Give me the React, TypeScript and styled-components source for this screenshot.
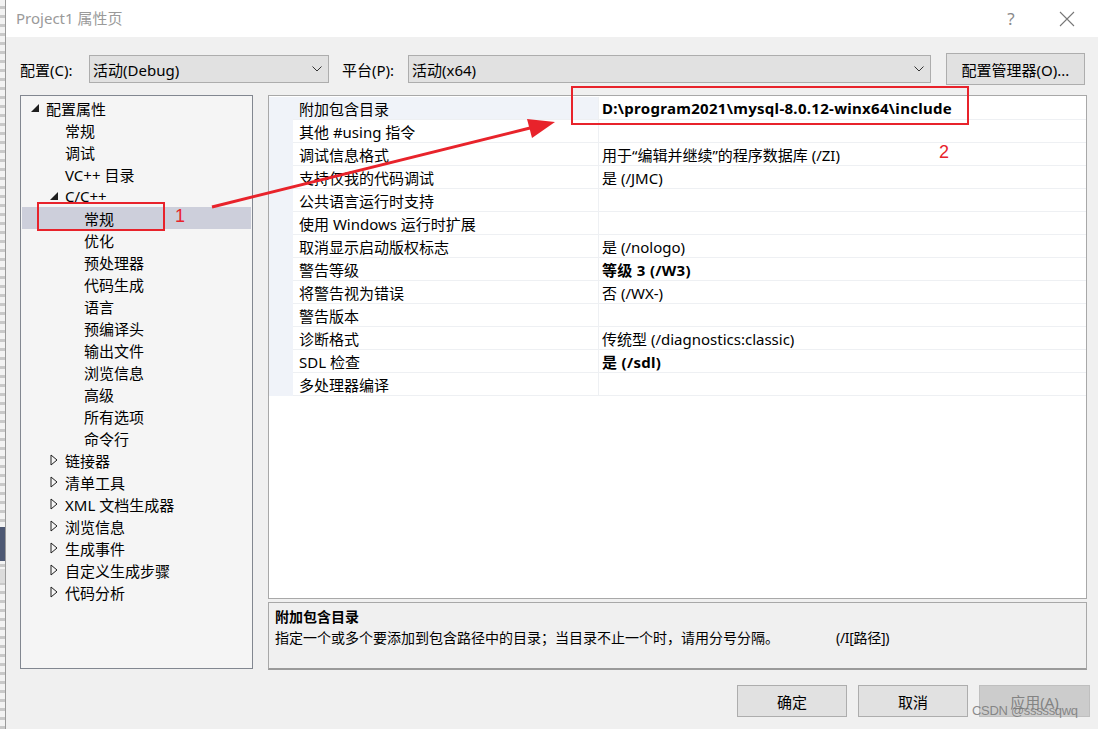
import React from 'react';
import styled, { createGlobalStyle } from 'styled-components';

const GlobalStyle = createGlobalStyle`
  html, body {
    margin: 0;
    padding: 0;
    background: #f0f0f0;
  }
  body {
    font-family: "Noto Sans", "Noto Sans CJK SC", sans-serif;
    font-size: 15px;
    color: #000;
  }
`;

const Page = styled.div`
  position: relative;
  width: 1098px;
  height: 729px;
  display: flex;
  overflow: hidden;
`;

const BackStrip = styled.div`
  width: 5px;
  flex-shrink: 0;
  background: repeating-linear-gradient(#f3f3f3 0 6px, #c9c9c9 6px 9px);
  border-right: 1px solid #9a9a9a;
  display: flex;
  flex-direction: column;
`;

const StripBlock = styled.div<{ $h: number; $c: string; $top: number }>`
  margin-top: ${p => p.$top}px;
  height: ${p => p.$h}px;
  background: ${p => p.$c};
`;

const Dialog = styled.div`
  flex: 1;
  display: flex;
  flex-direction: column;
  background: #f0f0f0;
`;

const TitleBar = styled.div`
  height: 37px;
  background: #fff;
  display: flex;
  align-items: center;
  padding-left: 10px;
  padding-right: 16px;
`;

const Title = styled.div`
  flex: 1;
  color: #9a9a9a;
  font-size: 15px;
  margin-top: -2px;
`;

const TitleIcon = styled.div`
  width: 30px;
  display: flex;
  justify-content: center;
  color: #8a8a8a;
  font-size: 17px;
  margin-left: 26px;
`;

const Body = styled.div`
  flex: 1;
  display: flex;
  flex-direction: column;
  padding: 16px 0 0 14px;
`;

const Toolbar = styled.div`
  display: flex;
  align-items: center;
  height: 32px;
`;

const Label = styled.div<{ $w: number }>`
  width: ${p => p.$w}px;
  font-size: 15px;
`;

const Select = styled.div<{ $w: number }>`
  width: ${p => p.$w}px;
  height: 28px;
  box-sizing: border-box;
  border: 1px solid #adadad;
  background: #e1e1e1;
  display: flex;
  align-items: center;
  padding-left: 3px;
  padding-right: 6px;
  font-size: 15px;
`;

const SelectText = styled.div`
  flex: 1;
`;

const Spacer = styled.div<{ $w: number }>`
  width: ${p => p.$w}px;
`;

const Button = styled.div<{ $w: number; $disabled?: boolean }>`
  width: ${p => p.$w}px;
  height: 32px;
  box-sizing: border-box;
  border: 1px solid ${p => (p.$disabled ? '#bfbfbf' : '#adadad')};
  background: ${p => (p.$disabled ? '#cccccc' : '#e1e1e1')};
  color: ${p => (p.$disabled ? '#838383' : '#000')};
  display: flex;
  align-items: center;
  justify-content: center;
  font-size: 15px;
`;

const Main = styled.div`
  display: flex;
  margin-top: 10px;
  gap: 15px;
`;

const TreePanel = styled.div`
  width: 233px;
  height: 574px;
  box-sizing: border-box;
  border: 1px solid #828790;
  background: #f5f5f5;
  padding: 1px 1px 0 1px;
`;

const TreeRow = styled.div<{ $level: number; $selected?: boolean }>`
  height: 22px;
  display: flex;
  align-items: center;
  padding-left: ${p => 7 + p.$level * 19}px;
  background: ${p => (p.$selected ? '#cdcfdb' : 'transparent')};
  font-size: 15px;
  white-space: nowrap;
`;

const Toggle = styled.div`
  width: 17px;
  height: 22px;
  display: flex;
  align-items: center;
  padding-left: 2px;
  box-sizing: border-box;
`;

const RightCol = styled.div`
  width: 819px;
  display: flex;
  flex-direction: column;
  gap: 3px;
`;

const Grid = styled.div`
  height: 504px;
  box-sizing: border-box;
  border: 1px solid #a8a8a8;
  background: #fff;
  padding-top: 1px;
`;

const PropRow = styled.div`
  display: grid;
  grid-template-columns: 24px 306px 1fr;
  height: 23px;
`;

const Gutter = styled.div`
  background: #f0f3f9;
`;

const NameCell = styled.div<{ $active?: boolean }>`
  background: ${p => (p.$active ? '#f0f3f9' : '#fff')};
  border-bottom: 1px solid #eef0f3;
  border-right: 1px solid #eef0f3;
  display: flex;
  align-items: center;
  padding-left: 6px;
  font-size: 15px;
  white-space: nowrap;
`;

const ValueCell = styled.div<{ $bold?: boolean }>`
  border-bottom: 1px solid #eef0f3;
  display: flex;
  align-items: center;
  padding-left: 3px;
  font-size: 15px;
  font-weight: ${p => (p.$bold ? 700 : 400)};
  letter-spacing: ${p => (p.$bold ? '0.3px' : 'normal')};
  white-space: nowrap;
`;

const Desc = styled.div`
  height: 68px;
  box-sizing: border-box;
  border: 1px solid #a8a8a8;
  border-bottom: 2px solid #9a9a9a;
  background: #f0f0f0;
  padding: 3px 6px;
  display: flex;
  flex-direction: column;
`;

const DescTitle = styled.div`
  font-weight: 700;
  font-size: 14px;
  line-height: 21px;
`;

const DescText = styled.div`
  font-size: 14px;
  line-height: 21px;
  white-space: nowrap;
`;

const Switch = styled.span`
  margin-left: 57px;
  letter-spacing: -0.3px;
`;

const Footer = styled.div`
  display: flex;
  justify-content: flex-end;
  gap: 11px;
  margin-top: 15px;
  padding-right: 8px;
`;

const Overlay = styled.svg`
  position: absolute;
  left: 0;
  top: 0;
  pointer-events: none;
`;

const Watermark = styled.div`
  position: absolute;
  left: 972px;
  top: 703px;
  font-family: "Liberation Sans", Arial, sans-serif;
  font-size: 13px;
  color: rgba(120, 120, 120, 0.85);
  letter-spacing: -0.3px;
`;

const Expanded = () => (
  <svg width="9" height="9" viewBox="0 0 9 9">
    <polygon points="8,0 8,8 0,8" fill="#1e1e1e" />
  </svg>
);

const Collapsed = () => (
  <svg width="8" height="12" viewBox="0 0 8 12">
    <polygon points="1,1 7,6 1,11" fill="none" stroke="#1e1e1e" strokeWidth="1" />
  </svg>
);

const Chevron = () => (
  <svg width="10" height="6" viewBox="0 0 10 6">
    <polyline points="0.5,0.5 5,5 9.5,0.5" fill="none" stroke="#333" strokeWidth="1" />
  </svg>
);

type TreeItem = { label: string; level: number; toggle?: 'open' | 'closed'; selected?: boolean };

const tree: TreeItem[] = [
  { label: '配置属性', level: 0, toggle: 'open' },
  { label: '常规', level: 1 },
  { label: '调试', level: 1 },
  { label: 'VC++ 目录', level: 1 },
  { label: 'C/C++', level: 1, toggle: 'open' },
  { label: '常规', level: 2, selected: true },
  { label: '优化', level: 2 },
  { label: '预处理器', level: 2 },
  { label: '代码生成', level: 2 },
  { label: '语言', level: 2 },
  { label: '预编译头', level: 2 },
  { label: '输出文件', level: 2 },
  { label: '浏览信息', level: 2 },
  { label: '高级', level: 2 },
  { label: '所有选项', level: 2 },
  { label: '命令行', level: 2 },
  { label: '链接器', level: 1, toggle: 'closed' },
  { label: '清单工具', level: 1, toggle: 'closed' },
  { label: 'XML 文档生成器', level: 1, toggle: 'closed' },
  { label: '浏览信息', level: 1, toggle: 'closed' },
  { label: '生成事件', level: 1, toggle: 'closed' },
  { label: '自定义生成步骤', level: 1, toggle: 'closed' },
  { label: '代码分析', level: 1, toggle: 'closed' },
];

const props: { name: string; value: string; bold?: boolean }[] = [
  { name: '附加包含目录', value: 'D:\\program2021\\mysql-8.0.12-winx64\\include', bold: true },
  { name: '其他 #using 指令', value: '' },
  { name: '调试信息格式', value: '用于“编辑并继续”的程序数据库 (/ZI)' },
  { name: '支持仅我的代码调试', value: '是 (/JMC)' },
  { name: '公共语言运行时支持', value: '' },
  { name: '使用 Windows 运行时扩展', value: '' },
  { name: '取消显示启动版权标志', value: '是 (/nologo)' },
  { name: '警告等级', value: '等级 3 (/W3)', bold: true },
  { name: '将警告视为错误', value: '否 (/WX-)' },
  { name: '警告版本', value: '' },
  { name: '诊断格式', value: '传统型 (/diagnostics:classic)' },
  { name: 'SDL 检查', value: '是 (/sdl)', bold: true },
  { name: '多处理器编译', value: '' },
];

export default function App() {
  return (
    <>
      <GlobalStyle />
      <Page>
        <BackStrip>
          <StripBlock $top={390} $h={10} $c="transparent" />
          <StripBlock $top={127} $h={34} $c="#4d5873" />
          <StripBlock $top={8} $h={14} $c="#dcdcdc" />
        </BackStrip>
        <Dialog>
          <TitleBar>
            <Title>Project1 属性页</Title>
            <TitleIcon>?</TitleIcon>
            <TitleIcon>
              <svg width="16" height="16" viewBox="0 0 16 16">
                <path d="M1 1 L15 15 M15 1 L1 15" stroke="#777" strokeWidth="1.1" />
              </svg>
            </TitleIcon>
          </TitleBar>
          <Body>
            <Toolbar>
              <Label $w={69}>配置(C):</Label>
              <Select $w={240}>
                <SelectText>活动(Debug)</SelectText>
                <Chevron />
              </Select>
              <Spacer $w={13} />
              <Label $w={66}>平台(P):</Label>
              <Select $w={523}>
                <SelectText>活动(x64)</SelectText>
                <Chevron />
              </Select>
              <Spacer $w={15} />
              <Button $w={139}>配置管理器(O)...</Button>
            </Toolbar>
            <Main>
              <TreePanel>
                {tree.map((t, i) => (
                  <TreeRow key={i} $level={t.level} $selected={t.selected}>
                    <Toggle>
                      {t.toggle === 'open' && <Expanded />}
                      {t.toggle === 'closed' && <Collapsed />}
                    </Toggle>
                    {t.label}
                  </TreeRow>
                ))}
              </TreePanel>
              <RightCol>
                <Grid>
                  {props.map((p, i) => (
                    <PropRow key={i}>
                      <Gutter />
                      <NameCell $active={i === 0}>{p.name}</NameCell>
                      <ValueCell $bold={p.bold}>{p.value}</ValueCell>
                    </PropRow>
                  ))}
                </Grid>
                <Desc>
                  <DescTitle>附加包含目录</DescTitle>
                  <DescText>
                    指定一个或多个要添加到包含路径中的目录；当目录不止一个时，请用分号分隔。
                    <Switch>(/I[路径])</Switch>
                  </DescText>
                </Desc>
              </RightCol>
            </Main>
            <Footer>
              <Button $w={110}>确定</Button>
              <Button $w={110}>取消</Button>
              <Button $w={111} $disabled>应用(A)</Button>
            </Footer>
          </Body>
        </Dialog>
        <Overlay width="1098" height="729" viewBox="0 0 1098 729">
          <rect x="38" y="203" width="126" height="27" fill="none" stroke="#e8232b" strokeWidth="2" />
          <rect x="572" y="87" width="396" height="37" fill="none" stroke="#e8232b" strokeWidth="2" />
          <line x1="212" y1="207" x2="530" y2="128" stroke="#e8232b" strokeWidth="3" />
          <polygon points="555,122 527,119 532,138" fill="#e8232b" />
          <text x="175" y="222" fill="#e8232b" fontSize="18" fontFamily="Liberation Sans, Arial, sans-serif">1</text>
          <text x="939" y="158" fill="#e8232b" fontSize="18" fontFamily="Liberation Sans, Arial, sans-serif">2</text>
        </Overlay>
        <Watermark>CSDN @sssssqwq</Watermark>
      </Page>
    </>
  );
}
